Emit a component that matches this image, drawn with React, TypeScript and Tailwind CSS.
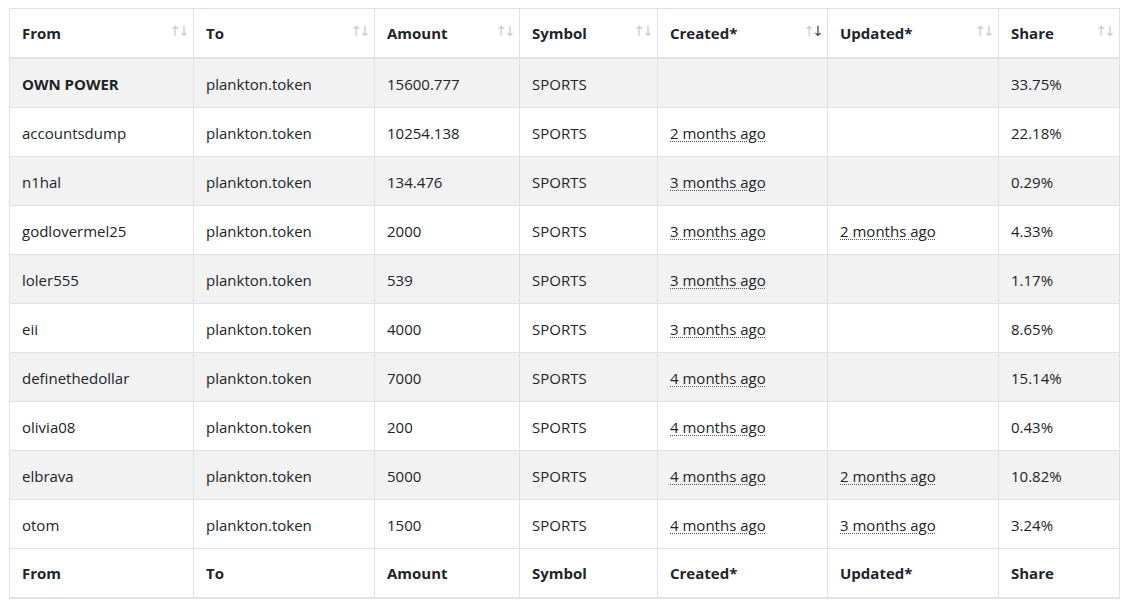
import React from 'react';

type Row = {
  from: string;
  amount: string;
  created?: string;
  updated?: string;
  share: string;
  bold?: boolean;
};

const rows: Row[] = [
  { from: 'OWN POWER', amount: '15600.777', share: '33.75%', bold: true },
  { from: 'accountsdump', amount: '10254.138', created: '2 months ago', share: '22.18%' },
  { from: 'n1hal', amount: '134.476', created: '3 months ago', share: '0.29%' },
  { from: 'godlovermel25', amount: '2000', created: '3 months ago', updated: '2 months ago', share: '4.33%' },
  { from: 'loler555', amount: '539', created: '3 months ago', share: '1.17%' },
  { from: 'eii', amount: '4000', created: '3 months ago', share: '8.65%' },
  { from: 'definethedollar', amount: '7000', created: '4 months ago', share: '15.14%' },
  { from: 'olivia08', amount: '200', created: '4 months ago', share: '0.43%' },
  { from: 'elbrava', amount: '5000', created: '4 months ago', updated: '2 months ago', share: '10.82%' },
  { from: 'otom', amount: '1500', created: '4 months ago', updated: '3 months ago', share: '3.24%' },
];

const columns = [
  { label: 'From', width: 'w-[184px]' },
  { label: 'To', width: 'w-[181px]' },
  { label: 'Amount', width: 'w-[145px]' },
  { label: 'Symbol', width: 'w-[138px]' },
  { label: 'Created*', width: 'w-[170px]', active: true },
  { label: 'Updated*', width: 'w-[171px]' },
  { label: 'Share', width: 'w-[121px]' },
];

const Ago = ({ text }: { text?: string }) =>
  text ? (
    <abbr title={text} className="underline decoration-dotted decoration-[#555] decoration-1 underline-offset-2">
      {text}
    </abbr>
  ) : null;

const SortArrows = ({ active }: { active?: boolean }) => (
  <span className="flex items-center font-['DejaVu_Sans',sans-serif] font-normal text-[14px] leading-none tracking-[-3px] mr-[-6px] mt-[-4px]">
    <span className="text-[#c8cbce]">↑</span>
    <span className={active ? 'text-[#444]' : 'text-[#c8cbce]'}>↓</span>
  </span>
);

const td = 'border border-[#dee2e6] px-3 py-3 align-top';

const App = () => {
  return (
    <div className="bg-white w-[1127px] h-[606px] pt-2 pl-[9px] font-['Open_Sans',sans-serif] text-[15px] leading-6 text-[#212529]">
      <table className="table-fixed border-collapse w-[1110px]">
        <colgroup>
          {columns.map((c) => (
            <col key={c.label} className={c.width} />
          ))}
        </colgroup>
        <thead>
          <tr>
            {columns.map((c) => (
              <th key={c.label} className={`${td} border-b-2 text-left font-bold`}>
                <div className="flex items-center justify-between">
                  <span>{c.label}</span>
                  <SortArrows active={c.active} />
                </div>
              </th>
            ))}
          </tr>
        </thead>
        <tbody>
          {rows.map((r, i) => (
            <tr key={r.from} className={i % 2 === 0 ? 'bg-[#f2f2f2]' : 'bg-white'}>
              <td className={`${td} pt-[13px] pb-[11px] ${r.bold ? 'font-bold' : ''}`}>{r.from}</td>
              <td className={`${td} pt-[13px] pb-[11px]`}>plankton.token</td>
              <td className={`${td} pt-[13px] pb-[11px]`}>{r.amount}</td>
              <td className={`${td} pt-[13px] pb-[11px]`}>SPORTS</td>
              <td className={`${td} pt-[13px] pb-[11px]`}>
                <Ago text={r.created} />
              </td>
              <td className={`${td} pt-[13px] pb-[11px]`}>
                <Ago text={r.updated} />
              </td>
              <td className={`${td} pt-[13px] pb-[11px]`}>{r.share}</td>
            </tr>
          ))}
        </tbody>
        <tfoot>
          <tr>
            {columns.map((c) => (
              <th key={c.label} className={`${td} border-b-2 text-left font-bold`}>
                {c.label}
              </th>
            ))}
          </tr>
        </tfoot>
      </table>
    </div>
  );
};

export default App;
